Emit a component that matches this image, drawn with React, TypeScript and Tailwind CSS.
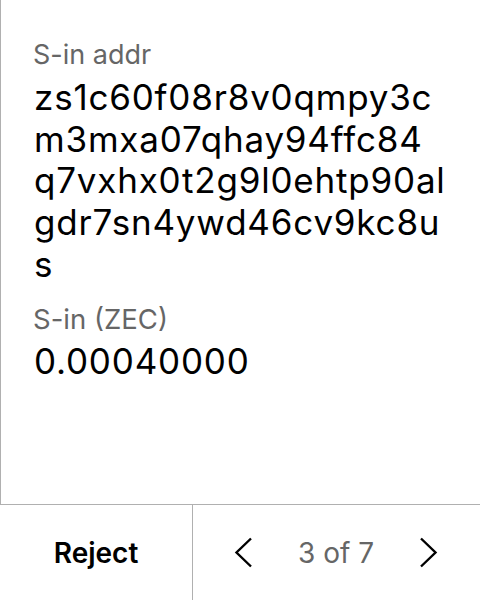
import React from "react";

const Chevron = ({ dir }: { dir: "left" | "right" }) => (
  <svg width="19" height="31" viewBox="0 0 19 31" fill="none">
    {dir === "left" ? (
      <path d="M17 1.5 L2.5 15.5 L17 29.5" stroke="#000" strokeWidth="2.4" />
    ) : (
      <path d="M2 1.5 L16.5 15.5 L2 29.5" stroke="#000" strokeWidth="2.4" />
    )}
  </svg>
);

const addrLines = [
  "zs1c60f08r8v0qmpy3c",
  "m3mxa07qhay94ffc84",
  "q7vxhx0t2g9l0ehtp90al",
  "gdr7sn4ywd46cv9kc8u",
  "s",
];

export default function App() {
  return (
    <div
      className="w-[480px] h-[600px] bg-white flex flex-col text-black"
      style={{ fontFamily: "Inter, 'Noto Sans', sans-serif" }}
    >
      <div className="flex-1 border-l border-[#b0b0b0] pl-[32px] pr-[20px] pt-[37px] flex flex-col">
        <div className="text-[27px] leading-[36px] text-[#666]">S-in addr</div>
        <div className="text-[35px] leading-[41.7px] tracking-[0.8px] mt-[4px] pl-[1px]">
          {addrLines.map((l) => (
            <div key={l}>{l}</div>
          ))}
        </div>
        <div className="text-[27.5px] leading-[36px] text-[#666] mt-[15px]">S-in (ZEC)</div>
        <div className="text-[35px] leading-[41.7px] tracking-[0.8px] mt-[4px] pl-[1px]">0.00040000</div>
      </div>
      <div className="h-[96px] border-t border-[#b0b0b0] flex">
        <div className="w-[192px] flex items-center justify-center text-[28px] font-semibold">
          Reject
        </div>
        <div className="flex-1 border-l border-[#b0b0b0] flex items-center justify-between pl-[41px] pr-[42px]">
          <Chevron dir="left" />
          <span className="text-[28px] text-[#666]">3 of 7</span>
          <Chevron dir="right" />
        </div>
      </div>
    </div>
  );
}
